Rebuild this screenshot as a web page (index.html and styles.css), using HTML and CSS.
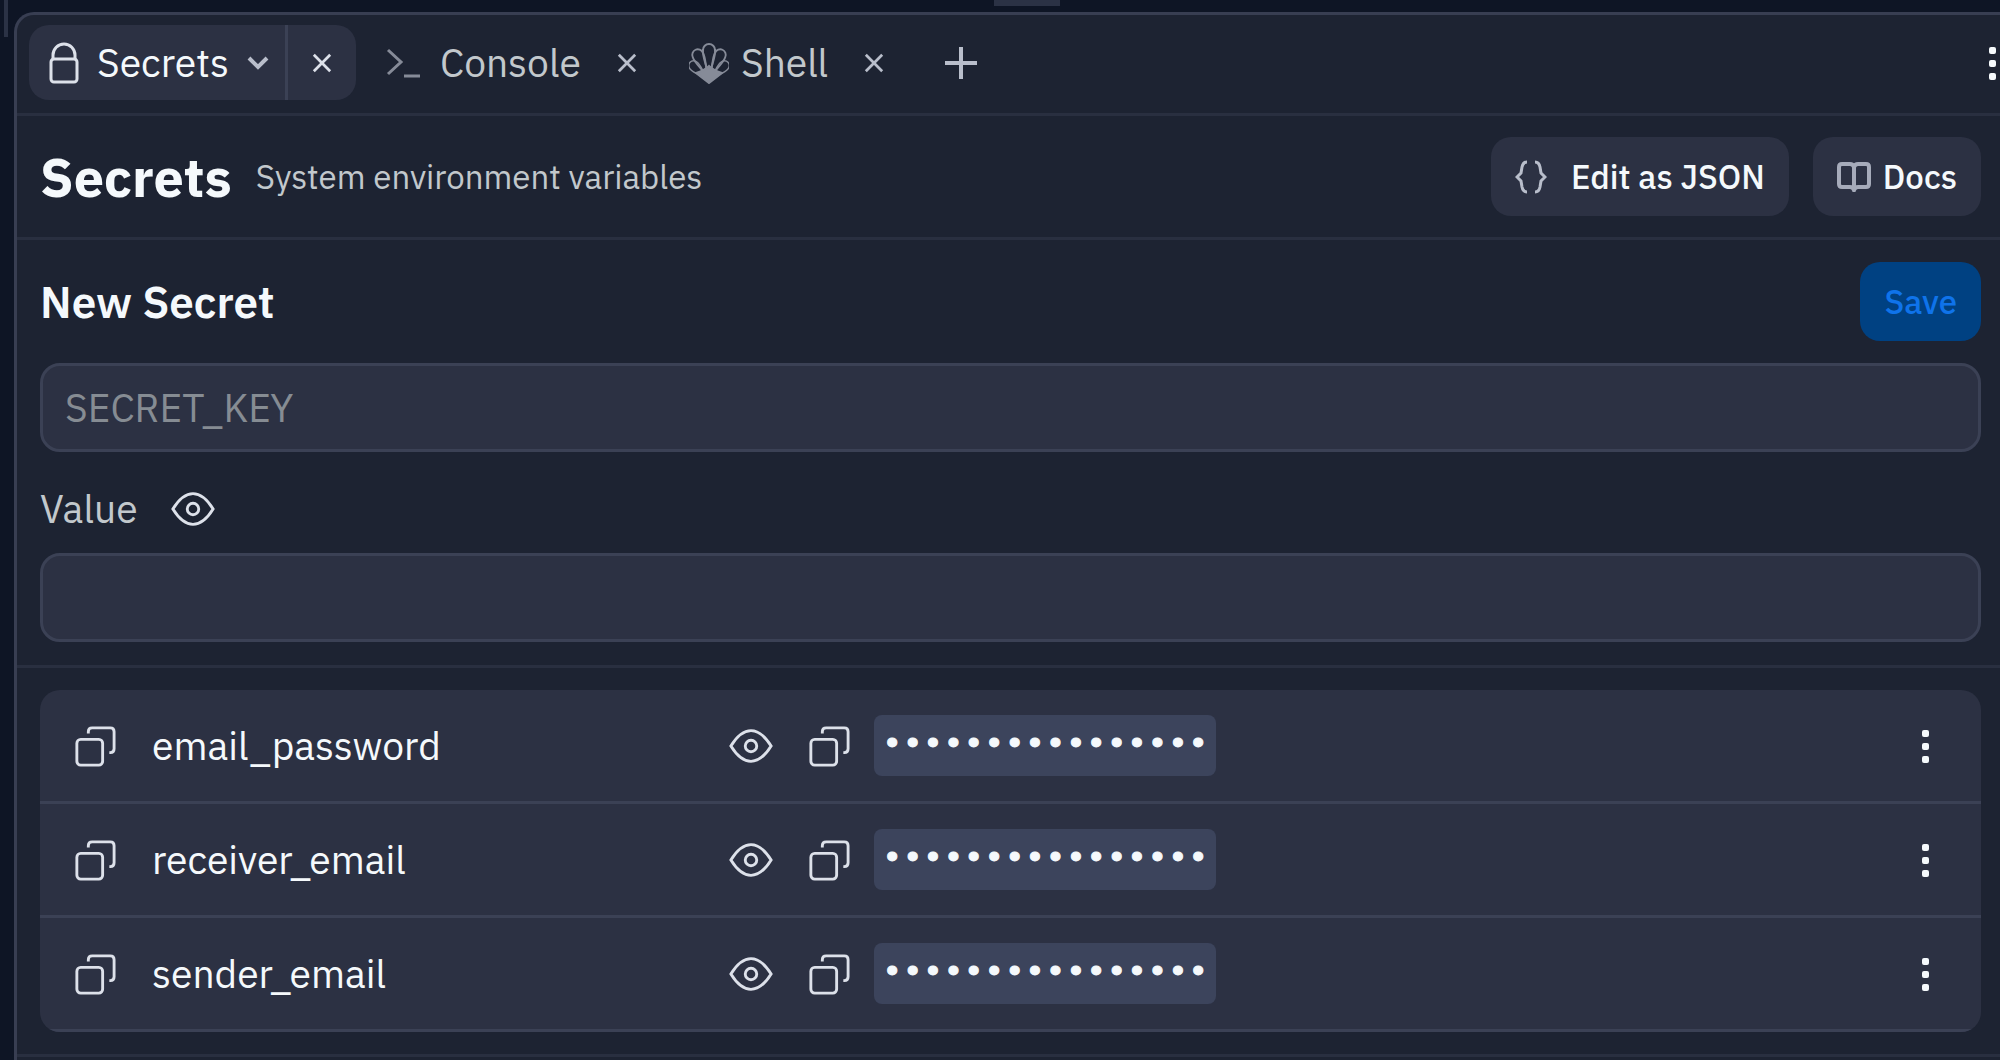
FILE: index.html
```html
<!DOCTYPE html>
<html lang="en">
<head>
    <meta charset="UTF-8">
    <meta name="viewport" content="width=device-width, initial-scale=1.0">
    <title>Secrets</title>

    <link rel="stylesheet" href="styles.css">
</head>
<body>

    <svg class="sprite" aria-hidden="true">
        <symbol id="icon-eye" viewBox="0 0 48 36">
            <path d="M3 18C8 10 15 2 24 2s16 8 21 16c-5 8-12 16-21 16S8 26 3 18z"/>
            <circle cx="24" cy="18" r="6"/>
        </symbol>
        <symbol id="icon-copy" viewBox="0 0 44 44">
            <rect x="3" y="15" width="27" height="27" rx="4"/>
            <path d="M15 9V7q0-4 4-4h19q4 0 4 4v18q0 4-4 4h-1"/>
        </symbol>
        <symbol id="icon-close" viewBox="0 0 22 22">
            <path d="M2 2l18 18M20 2L2 20"/>
        </symbol>
        <symbol id="icon-more" viewBox="0 0 8 36">
            <rect x="1" y="2" width="7" height="7" rx="2"/>
            <rect x="1" y="15" width="7" height="7" rx="2"/>
            <rect x="1" y="28" width="7" height="7" rx="2"/>
        </symbol>
    </svg>

    <div class="workspace">
        <div class="pane-edge"></div>
        <div class="drag-handle"></div>

        <main class="pane">
            <nav class="tabs">
                <div class="tab active">
                    <button class="tab-button">
                        <svg class="icon" width="30" height="42" viewBox="0 0 30 42">
                            <rect x="2" y="17" width="26" height="23" rx="3"/>
                            <path d="M4 17v-4a11 11 0 0 1 22 0v4"/>
                        </svg>
                        Secrets
                        <svg class="icon chevron" width="22" height="14" viewBox="0 0 22 14"><path d="M2 2l9 9 9-9"/></svg>
                    </button>
                    <button class="tab-close" aria-label="Close Secrets">
                        <svg class="icon" width="20" height="20"><use href="#icon-close"/></svg>
                    </button>
                </div>
                <div class="tab console">
                    <button class="tab-button">
                        <svg class="icon dim" width="36" height="30" viewBox="0 0 36 30"><path d="M2 2l13 12L2 26M18 28h16"/></svg>
                        Console
                    </button>
                    <button class="tab-close" aria-label="Close Console">
                        <svg class="icon soft" width="20" height="20"><use href="#icon-close"/></svg>
                    </button>
                </div>
                <div class="tab shell">
                    <button class="tab-button">
                        <svg class="icon dim scallop" width="40" height="42" viewBox="0 0 40 42">
                            <g transform="translate(20 38)">
                                <path d="M-1-6C-2-14-7-24-6-30A6 6 0 0 1 6-30C7-24 2-14 1-6"/>
                                <path transform="rotate(-24) scale(.92)" d="M-1-6C-2-14-7-24-6-30A6 6 0 0 1 6-30C7-24 2-14 1-6"/>
                                <path transform="rotate(24) scale(.92)" d="M-1-6C-2-14-7-24-6-30A6 6 0 0 1 6-30C7-24 2-14 1-6"/>
                                <path transform="rotate(-47) scale(.7)" d="M-1-6C-2-14-8-22-7-30A7 7 0 0 1 7-30C8-22 2-14 1-6"/>
                                <path transform="rotate(47) scale(.7)" d="M-1-6C-2-14-8-22-7-30A7 7 0 0 1 7-30C8-22 2-14 1-6"/>
                                <path class="solid" d="M-13-7Q-5-9 0-14Q5-9 13-7L0 3z"/>
                            </g>
                        </svg>
                        Shell
                    </button>
                    <button class="tab-close" aria-label="Close Shell">
                        <svg class="icon soft" width="20" height="20"><use href="#icon-close"/></svg>
                    </button>
                </div>
                <button class="add-tab" aria-label="New tab">
                    <svg class="icon soft plus" width="34" height="34" viewBox="0 0 34 34"><path d="M17 1v32M1 17h32"/></svg>
                </button>
                <button class="pane-menu" aria-label="Pane menu">
                    <svg class="icon more" width="8" height="36"><use href="#icon-more"/></svg>
                </button>
            </nav>

            <header class="pane-header">
                <h1>Secrets</h1>
                <p>System environment variables</p>
                <button class="button json">
                    <svg class="icon soft" width="32" height="36" viewBox="0 0 32 36">
                        <path d="M12 3Q8 3 7 8L6 14L2 18L6 22L7 28Q8 33 12 33"/>
                        <path d="M20 3Q24 3 25 8L26 14L30 18L26 22L25 28Q24 33 20 33"/>
                    </svg>
                    Edit as JSON
                </button>
                <a class="button" href="#docs">
                    <svg class="icon book" width="34" height="30" viewBox="0 0 34 30">
                        <path d="M17 5q-1-3-4-3H5Q2 2 2 5v17q0 3 3 3h8q3 0 4 3q1-3 4-3h8q3 0 3-3V5q0-3-3-3h-8q-3 0-4 3v23"/>
                    </svg>
                    Docs
                </a>
            </header>

            <form class="new-secret">
                <div class="form-header">
                    <h2><label for="key">New Secret</label></h2>
                    <button class="button save" type="submit" disabled>Save</button>
                </div>
                <input type="text" id="key" placeholder="SECRET_KEY">
                <div class="value-label">
                    <label for="value">Value</label>
                    <button type="button" aria-label="Show value">
                        <svg class="icon" width="46" height="36"><use href="#icon-eye"/></svg>
                    </button>
                </div>
                <input type="text" id="value">
            </form>

            <section class="secrets">
                <ul id="secret-list"></ul>
            </section>
        </main>
    </div>

    <script>
        const secrets = ["email_password", "receiver_email", "sender_email"];
        const list = document.getElementById("secret-list");

        secrets.forEach(name => {
            const row = document.createElement("li");
            row.innerHTML = `
                <button class="copy-name" aria-label="Copy name">
                    <svg class="icon" width="42" height="42"><use href="#icon-copy"/></svg>
                </button>
                <span class="name">${name}</span>
                <button class="show" aria-label="Show ${name}">
                    <svg class="icon" width="46" height="36"><use href="#icon-eye"/></svg>
                </button>
                <button class="copy-value" aria-label="Copy value">
                    <svg class="icon" width="42" height="42"><use href="#icon-copy"/></svg>
                </button>
                <code>${"•".repeat(16)}</code>
                <button class="row-menu" aria-label="More actions">
                    <svg class="icon more" width="8" height="36"><use href="#icon-more"/></svg>
                </button>`;
            list.appendChild(row);
        });
    </script>

</body>
</html>
```
FILE: styles.css
```css
* {
    margin: 0;
    padding: 0;
    box-sizing: border-box;
}

body {
    background-color: #0e1525;
    color: #f5f9fc;
    font-family: "IBM Plex Sans", Roboto, sans-serif;
    font-size: 39px;
    line-height: 48px;
}

button,
input {
    background: none;
    border: none;
    color: inherit;
    font: inherit;
}

button {
    display: flex;
    align-items: center;
    cursor: pointer;
}

ul {
    list-style: none;
}

.sprite {
    position: absolute;
    width: 0;
    height: 0;
}

.icon {
    flex: none;
    fill: none;
    stroke: #dde1ea;
    stroke-width: 3;
}

.icon.soft {
    stroke: #b9becb;
}

.icon.dim {
    stroke: #868b98;
}

.icon.more {
    fill: #f5f9fc;
    stroke: none;
}

.icon.chevron,
.icon.plus {
    stroke: #b9becb;
    stroke-width: 4;
}

.icon.book {
    stroke: #a6abba;
    stroke-width: 4;
}

.icon.scallop {
    stroke-width: 2;
}

.solid {
    fill: #868b98;
}

.workspace {
    position: relative;
    display: flex;
    min-height: 100vh;
    padding: 12px 0 0 14px;
    overflow: hidden;
}

/* neighbouring pane and resize handle */
.pane-edge {
    position: absolute;
    top: 0;
    left: 4px;
    width: 4px;
    height: 37px;
    background-color: #2b3245;
}

.drag-handle {
    position: absolute;
    top: 0;
    left: 994px;
    width: 66px;
    height: 6px;
    background-color: #2b3245;
}

.pane {
    flex: 1;
    background-color: #1d2332;
    border: 3px solid #383e52;
    border-right: none;
    border-bottom: none;
    border-top-left-radius: 20px;
}

.tabs {
    display: flex;
    align-items: center;
    padding: 10px 4px 13px 12px;
    border-bottom: 3px solid #292f40;
}

.tab {
    display: flex;
    height: 75px;
    color: #c2c8cc;
}

.tab-button {
    gap: 18px;
}

.active {
    background-color: #2c3143;
    border-radius: 20px;
    color: #f5f9fc;
}

.active .tab-button {
    padding: 0 16px 0 20px;
}

.active .tab-close {
    padding: 0 24px;
    border-left: 3px solid #3b4155;
}

.console {
    gap: 36px;
    margin-left: 30px;
}

.shell {
    gap: 36px;
    margin-left: 52px;
}

.shell .tab-button {
    gap: 12px;
}

.add-tab {
    margin-left: 60px;
}

.pane-menu {
    margin-left: auto;
}

.pane-header {
    display: flex;
    align-items: center;
    gap: 24px;
    padding: 21px 19px 21px 23px;
    border-bottom: 3px solid #292f40;
}

h1 {
    font-size: 54px;
    font-weight: 700;
}

.pane-header p {
    flex: 1;
    font-size: 33px;
    color: #c2c8cc;
}

.button {
    display: flex;
    align-items: center;
    gap: 12px;
    height: 79px;
    padding: 0 24px;
    background-color: #2c3143;
    border-radius: 20px;
    color: #f5f9fc;
    font-size: 33px;
    font-weight: 500;
    text-decoration: none;
}

.json {
    gap: 24px;
}

.save {
    background-color: #004182;
    color: #0f73ea;
}

.new-secret {
    padding: 22px 19px 23px 23px;
    border-bottom: 3px solid #292f40;
}

.form-header {
    display: flex;
    align-items: center;
    justify-content: space-between;
    margin-bottom: 22px;
}

h2 {
    font-size: 44px;
    font-weight: 600;
}

.new-secret input {
    display: block;
    width: 100%;
    height: 89px;
    padding: 0 22px;
    background-color: #2c3143;
    border: 3px solid #3b4155;
    border-radius: 20px;
}

.new-secret input::placeholder {
    color: #868c93;
}

.value-label {
    display: flex;
    align-items: center;
    gap: 32px;
    padding: 33px 0 20px;
    color: #c2c8cc;
}

.secrets {
    padding: 22px 19px 22px 23px;
    border-bottom: 3px solid #292f40;
}

.secrets ul {
    overflow: hidden;
    background-color: #2c3143;
    border-radius: 20px;
}

.secrets li {
    display: flex;
    align-items: center;
    padding: 25px 52px 25px 34px;
    border-bottom: 3px solid #3b4155;
}

.name {
    width: 612px;
    padding-left: 36px;
}

.copy-value {
    margin: 0 24px 0 34px;
}

code {
    padding: 0 8px;
    background-color: #3c445c;
    border-radius: 8px;
    font-family: "Liberation Mono", monospace;
    font-size: 34px;
    line-height: 61px;
    -webkit-text-stroke: 1px #f5f9fc;
}

.row-menu {
    margin-left: auto;
}
```
